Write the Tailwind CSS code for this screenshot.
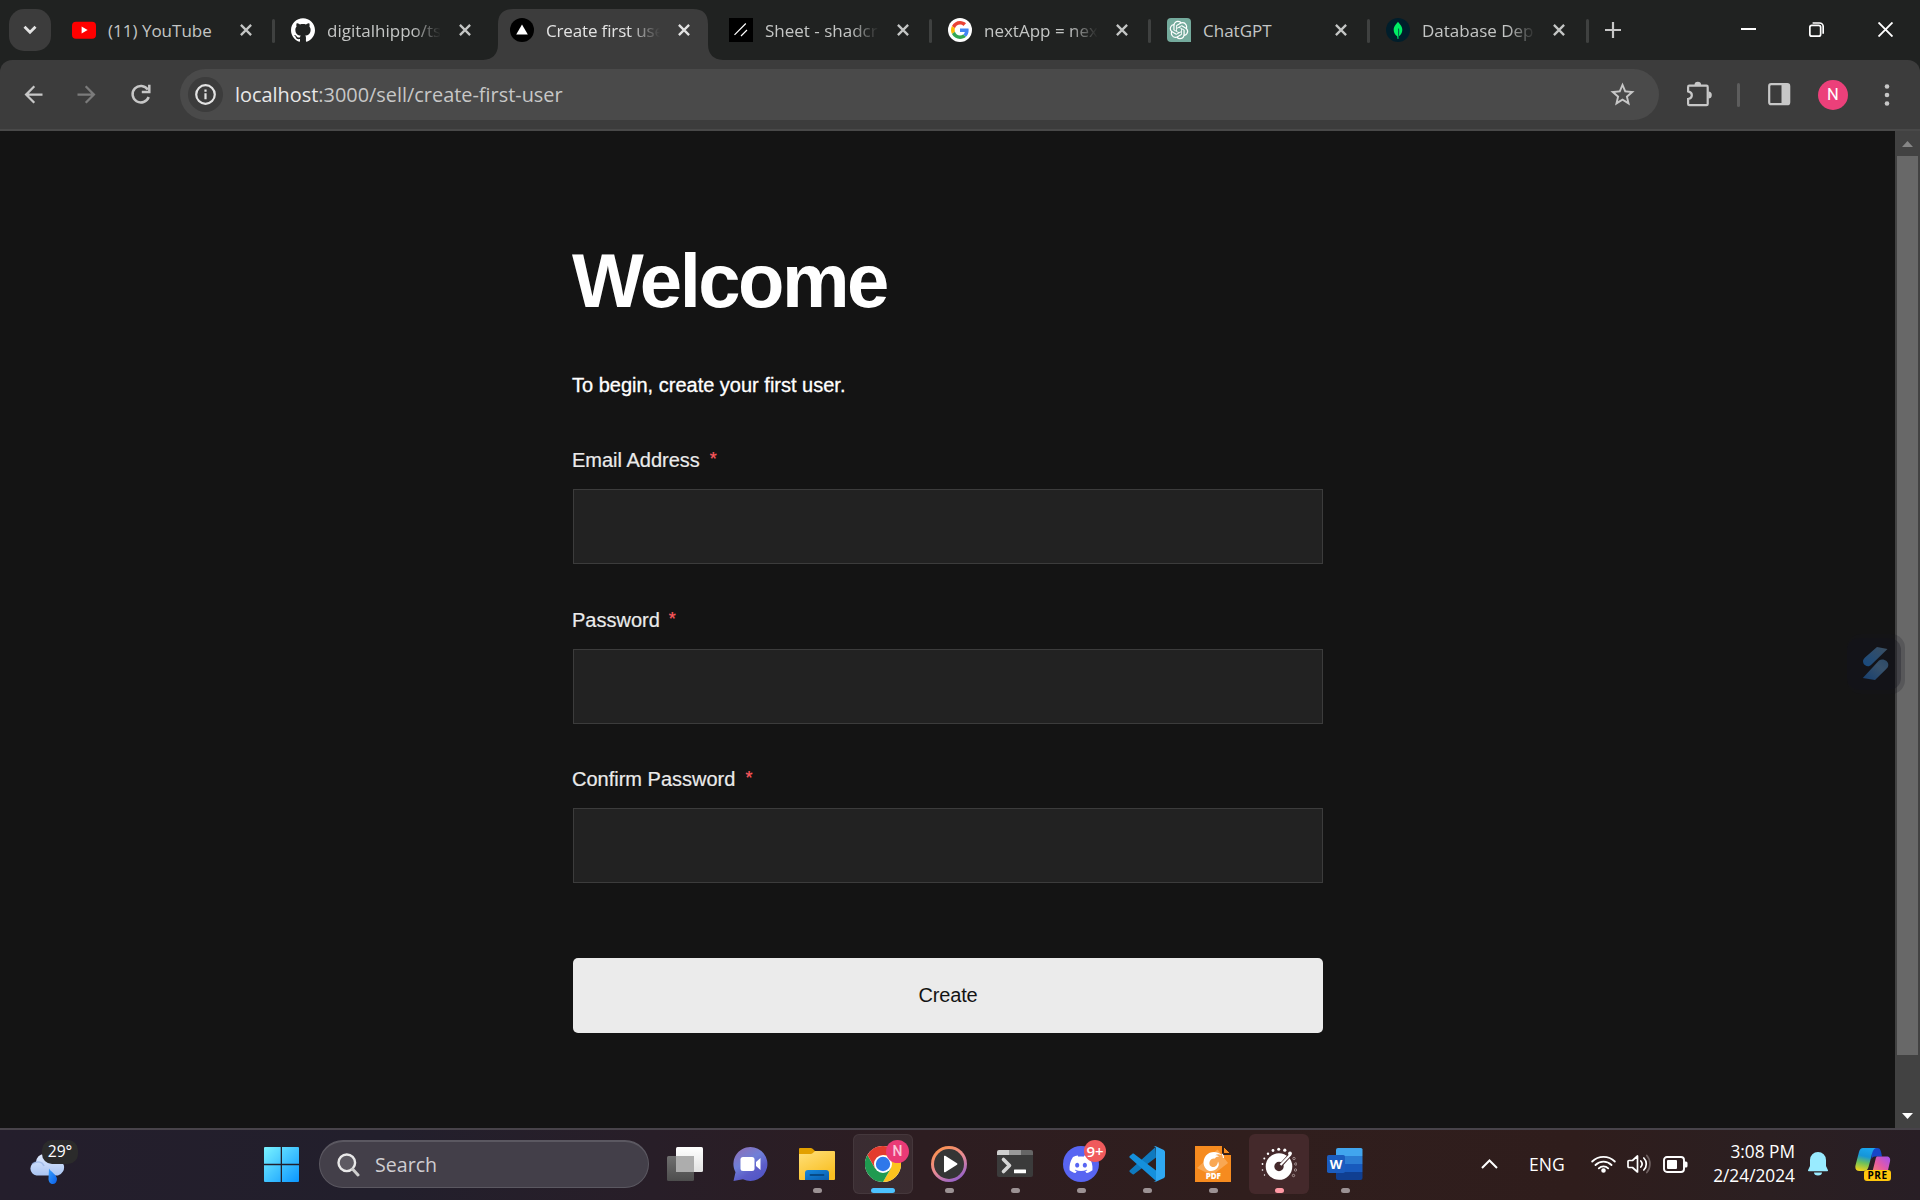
<!DOCTYPE html>
<html lang="en">
<head>
<meta charset="utf-8">
<title>Create first user</title>
<script src="https://cdn.jsdelivr.net/npm/@tailwindcss/browser@4"></script>
</head>
<body class="flex h-[1200px] w-[1920px] flex-col overflow-hidden bg-[#202221] font-['Open_Sans','Noto_Sans',sans-serif]">

<svg class="hidden">
  <symbol id="x" viewBox="0 0 12 12"><path d="M.9.9l10.2 10.2M11.1.9L.9 11.1" stroke="currentColor" stroke-width="2.3" fill="none"/></symbol>
</svg>

<!-- Tab strip -->
<header class="flex h-[60px] shrink-0 text-[17px] leading-6 text-[#c4c6c5]">
  <div class="w-[60px] pt-[9px] pl-[9px]">
    <div class="flex h-[42px] w-[42px] items-center justify-center rounded-[15px] bg-[#3c3c3c]">
      <svg width="14" height="10" viewBox="0 0 14 10" fill="none" stroke="#e3e3e3" stroke-width="2.8"><path d="M1.500 1.800L7 7.300l5.500-5.500"/></svg>
    </div>
  </div>

  <div class="flex w-[219px] items-center pl-3">
    <svg width="24" height="24" viewBox="0 0 24 24"><rect y="3.700" width="24" height="17" rx="4" fill="#f00"/><path d="M9.600 8.500v7l6-3.500z" fill="#fff"/></svg>
    <span class="mt-[2px] ml-3 w-[114px] overflow-hidden whitespace-nowrap">(11) YouTube</span>
    <svg class="ml-[18px]" width="12" height="12"><use href="#x"/></svg>
    <i class="mt-[2px] ml-[20px] h-6 w-[3px] rounded-full bg-[#3f4140]"></i>
  </div>

  <div class="flex w-[219px] items-center pl-3">
    <svg width="24" height="24" viewBox="0 0 24 24" fill="#fff"><path d="M12 .297c-6.630 0-12 5.373-12 12 0 5.303 3.438 9.800 8.205 11.385.6.113.82-.258.82-.577 0-.285-.01-1.040-.015-2.040-3.338.724-4.042-1.610-4.042-1.610C4.422 18.070 3.633 17.700 3.633 17.700c-1.087-.744.084-.729.084-.729 1.205.084 1.838 1.236 1.838 1.236 1.070 1.835 2.809 1.305 3.495.998.108-.776.417-1.305.76-1.605-2.665-.3-5.466-1.332-5.466-5.930 0-1.310.465-2.380 1.235-3.220-.135-.303-.54-1.523.105-3.176 0 0 1.005-.322 3.300 1.230.96-.267 1.980-.399 3-.405 1.020.006 2.040.138 3 .405 2.280-1.552 3.285-1.230 3.285-1.230.645 1.653.24 2.873.12 3.176.765.84 1.230 1.910 1.230 3.220 0 4.610-2.805 5.625-5.475 5.920.42.36.81 1.096.81 2.220 0 1.606-.015 2.896-.015 3.286 0 .315.21.69.825.57C20.565 22.092 24 17.592 24 12.297c0-6.627-5.373-12-12-12"/></svg>
    <span class="mt-[2px] ml-3 w-[114px] overflow-hidden whitespace-nowrap [mask-image:linear-gradient(to_right,#000_75%,transparent)]">digitalhippo/ts</span>
    <svg class="ml-[18px]" width="12" height="12"><use href="#x"/></svg>
  </div>

  <div class="relative flex w-[219px] items-center pl-3 text-[#e3e3e3]">
    <svg class="absolute bottom-0 -left-[15px]" width="240" height="51" viewBox="0 0 240 51" fill="#3c3c3c"><path d="M0 51Q15 50 15 35V15Q15 0 30 0H210Q225 0 225 15V35Q225 50 240 51Z"/></svg>
    <svg class="relative" width="24" height="24" viewBox="0 0 24 24"><circle cx="12" cy="12" r="12"/><path d="M12 6.500l5.800 9.900H6.200z" fill="#fff"/></svg>
    <span class="relative mt-[2px] ml-3 w-[114px] overflow-hidden tracking-[-0.150px] whitespace-nowrap [mask-image:linear-gradient(to_right,#000_72%,transparent)]">Create first use</span>
    <svg class="relative ml-[18px]" width="12" height="12"><use href="#x"/></svg>
  </div>

  <div class="flex w-[219px] items-center pl-3">
    <svg width="24" height="24" viewBox="0 0 24 24"><rect width="24" height="24"/><path d="M5.500 16.800L16.800 5.500M12 18l6-6" stroke="#fff" stroke-width="1.200"/></svg>
    <span class="mt-[2px] ml-3 w-[114px] overflow-hidden whitespace-nowrap [mask-image:linear-gradient(to_right,#000_75%,transparent)]">Sheet - shadcr</span>
    <svg class="ml-[18px]" width="12" height="12"><use href="#x"/></svg>
    <i class="mt-[2px] ml-[20px] h-6 w-[3px] rounded-full bg-[#3f4140]"></i>
  </div>

  <div class="flex w-[219px] items-center pl-3">
    <svg width="24" height="24" viewBox="0 0 24 24"><circle cx="12" cy="12" r="12" fill="#fff"/><g transform="translate(3 3) scale(.375)"><path fill="#EA4335" d="M24 9.500c3.540 0 6.710 1.220 9.210 3.600l6.850-6.850C35.900 2.380 30.470 0 24 0 14.620 0 6.510 5.380 2.560 13.220l7.980 6.190C12.430 13.720 17.740 9.500 24 9.500z"/><path fill="#4285F4" d="M46.980 24.550c0-1.570-.15-3.090-.38-4.550H24v9.020h12.940c-.58 2.960-2.260 5.480-4.780 7.180l7.730 6c4.510-4.180 7.090-10.360 7.090-17.650z"/><path fill="#FBBC05" d="M10.530 28.590c-.48-1.450-.76-2.990-.76-4.590s.27-3.140.76-4.590l-7.980-6.190C.92 16.460 0 20.120 0 24c0 3.880.92 7.540 2.560 10.780l7.970-6.190z"/><path fill="#34A853" d="M24 48c6.480 0 11.930-2.130 15.890-5.810l-7.730-6c-2.150 1.450-4.920 2.300-8.160 2.300-6.260 0-11.570-4.220-13.470-9.910l-7.980 6.190C6.510 42.620 14.620 48 24 48z"/></g></svg>
    <span class="mt-[2px] ml-3 w-[114px] overflow-hidden whitespace-nowrap [mask-image:linear-gradient(to_right,#000_75%,transparent)]">nextApp = nex</span>
    <svg class="ml-[18px]" width="12" height="12"><use href="#x"/></svg>
    <i class="mt-[2px] ml-[20px] h-6 w-[3px] rounded-full bg-[#3f4140]"></i>
  </div>

  <div class="flex w-[219px] items-center pl-3">
    <svg width="24" height="24" viewBox="0 0 24 24"><path d="M4 0h16a4 4 0 0 1 4 4v20H4a4 4 0 0 1-4-4V4a4 4 0 0 1 4-4z" fill="#74aa9c"/><path transform="translate(2.700 2.700) scale(.775)" fill="#fff" d="M22.2819 9.8211a5.9847 5.9847 0 0 0-.5157-4.9108 6.0462 6.0462 0 0 0-6.5098-2.9A6.0651 6.0651 0 0 0 4.9807 4.1818a5.9847 5.9847 0 0 0-3.9977 2.9 6.0462 6.0462 0 0 0 .7427 7.0966 5.98 5.98 0 0 0 .511 4.9107 6.051 6.051 0 0 0 6.5146 2.9001A5.9847 5.9847 0 0 0 13.2599 24a6.0557 6.0557 0 0 0 5.7718-4.2058 5.9894 5.9894 0 0 0 3.9977-2.9001 6.0557 6.0557 0 0 0-.7475-7.073zm-9.022 12.6081a4.4755 4.4755 0 0 1-2.8764-1.0408l.1419-.0804 4.7783-2.7582a.7948.7948 0 0 0 .3927-.6813v-6.7369l2.02 1.1686a.071.071 0 0 1 .038.052v5.5826a4.504 4.504 0 0 1-4.4945 4.4944zm-9.6607-4.1254a4.4708 4.4708 0 0 1-.5346-3.0137l.142.0852 4.783 2.7582a.7712.7712 0 0 0 .7806 0l5.8428-3.3685v2.3324a.0804.0804 0 0 1-.0332.0615L9.74 19.9502a4.4992 4.4992 0 0 1-6.1408-1.6464zM2.3408 7.8956a4.485 4.485 0 0 1 2.3655-1.9728V11.6a.7664.7664 0 0 0 .3879.6765l5.8144 3.3543-2.0201 1.1685a.0757.0757 0 0 1-.071 0l-4.8303-2.7865A4.504 4.504 0 0 1 2.3408 7.872zm16.5963 3.8558L13.1038 8.364 15.1192 7.2a.0757.0757 0 0 1 .071 0l4.8303 2.7913a4.4944 4.4944 0 0 1-.6765 8.1042v-5.6772a.79.79 0 0 0-.407-.667zm2.0107-3.0231l-.142-.0852-4.7735-2.7818a.7759.7759 0 0 0-.7854 0L9.409 9.2297V6.8974a.0662.0662 0 0 1 .0284-.0615l4.8303-2.7866a4.4992 4.4992 0 0 1 6.6802 4.66zM8.3065 12.863l-2.02-1.1638a.0804.0804 0 0 1-.038-.0567V6.0742a4.4992 4.4992 0 0 1 7.3757-3.4537l-.142.0805L8.704 5.459a.7948.7948 0 0 0-.3927.6813zm1.0976-2.3654l2.602-1.4998 2.6069 1.4998v2.9994l-2.5974 1.4997-2.6067-1.4997Z"/></svg>
    <span class="mt-[2px] ml-3 w-[114px] overflow-hidden whitespace-nowrap">ChatGPT</span>
    <svg class="ml-[18px]" width="12" height="12"><use href="#x"/></svg>
    <i class="mt-[2px] ml-[20px] h-6 w-[3px] rounded-full bg-[#3f4140]"></i>
  </div>

  <div class="flex w-[219px] items-center pl-3">
    <svg width="24" height="24" viewBox="0 0 24 24"><circle cx="12" cy="12" r="12" fill="#001e2b"/><path d="M12 3.800c.6 1.400 4.300 3.700 4.300 8.200 0 3-1.700 5-3.500 6.300L12.400 21h-.8l-.4-2.700C9.400 17 7.700 15 7.700 12c0-4.500 3.700-6.800 4.300-8.200z" fill="#00ed64"/><path d="M12 10.500h1c.4 2 .3 5.500-.2 7.600L12.400 21H12z" fill="#00684a"/></svg>
    <span class="mt-[2px] ml-3 w-[114px] overflow-hidden whitespace-nowrap [mask-image:linear-gradient(to_right,#000_75%,transparent)]">Database Dep</span>
    <svg class="ml-[17px]" width="12" height="12"><use href="#x"/></svg>
    <i class="mt-[2px] ml-[21px] h-6 w-[3px] rounded-full bg-[#3f4140]"></i>
  </div>

  <svg class="mt-[22px] ml-[12px]" width="16" height="16" viewBox="0 0 16 16" stroke="#c7c7c7" stroke-width="2.200"><path d="M8 0v16M0 8h16"/></svg>

  <div class="ml-auto flex items-start pt-[22px] pr-[27px]">
    <svg width="15" height="15" viewBox="0 0 15 15"><path d="M0 7h15" stroke="#fff" stroke-width="2"/></svg>
    <svg class="ml-[53px]" width="15" height="15" viewBox="0 0 15 15" fill="none" stroke="#fff" stroke-width="1.700"><rect x=".85" y="3.350" width="10.800" height="10.800" rx="2"/><path d="M3.600 1h6.900a3.700 3.700 0 0 1 3.700 3.700v7"/></svg>
    <svg class="ml-[54px]" width="15" height="15" viewBox="0 0 15 15" stroke="#fff" stroke-width="1.900"><path d="M.5.5l14 14M14.500.5l-14 14"/></svg>
  </div>
</header>

<!-- Toolbar -->
<nav class="flex h-[71px] shrink-0 items-center rounded-t-[12px] border-b-2 border-[#494949] bg-[#3c3c3c]">
  <svg class="ml-[20px]" width="27" height="27" viewBox="0 0 24 24" fill="#c7c7c7"><path d="M20 11H7.830l5.590-5.590L12 4l-8 8 8 8 1.410-1.410L7.830 13H20v-2z"/></svg>
  <svg class="ml-[26px]" width="27" height="27" viewBox="0 0 24 24" fill="#7b7b7b"><path d="M4 11h12.170l-5.590-5.590L12 4l8 8-8 8-1.410-1.410L16.170 13H4v-2z"/></svg>
  <svg class="ml-[27px]" width="27" height="27" viewBox="0 0 27 27" fill="none" stroke="#c7c7c7" stroke-width="2.500"><path d="M20.800 8.600A8.300 8.300 0 1 0 21.700 16"/><path d="M22.300 3.800v7.200h-7.500"/></svg>
  <div class="ml-[26px] flex h-[51px] w-[1479px] items-center rounded-full bg-[#4a4a4a] pl-2">
    <span class="flex h-[35px] w-[35px] items-center justify-center rounded-full bg-[#3c3c3c]">
      <svg width="21" height="21" viewBox="0 0 21 21"><circle cx="10.500" cy="10.500" r="9.300" fill="none" stroke="#e3e3e3" stroke-width="2.200"/><path d="M10.500 9.300v6M10.500 5.400v2.300" stroke="#e3e3e3" stroke-width="2.200"/></svg>
    </span>
    <span class="ml-[12px] text-[19.900px] leading-[30px] whitespace-nowrap text-[#c7c7c7]"><span class="text-[#e8e8e8]">localhost</span>:3000/sell/create-first-user</span>
    <svg class="mr-[22px] ml-auto" width="29" height="29" viewBox="0 0 24 24" fill="#c7c7c7"><path d="M22 9.240l-7.190-.62L12 2 9.190 8.630 2 9.240l5.460 4.730L5.820 21 12 17.270 18.180 21l-1.630-7.030L22 9.240zM12 15.400l-3.760 2.270 1-4.280-3.320-2.880 4.380-.38L12 6.100l1.710 4.040 4.380.38-3.320 2.880 1 4.280L12 15.400z"/></svg>
  </div>
  <svg class="mb-[2px] ml-[27px]" width="26" height="26" viewBox="0 0 26 26"><path d="M3.300 4.700h17.200a1.200 1.200 0 0 1 1.200 1.200v17a1.200 1.200 0 0 1-1.200 1.200H3.300a1.200 1.200 0 0 1-1.200-1.200V18c5-1 5-6.600 0-7.600V5.900a1.200 1.200 0 0 1 1.200-1.200z" fill="none" stroke="#c7c7c7" stroke-width="2.200"/><path d="M8.500 4a3.300 3.300 0 0 1 6.600 0zM22.300 10.600a3.400 3.400 0 0 1 0 7z" fill="#c7c7c7"/></svg>
  <i class="ml-[25px] h-6 w-[3px] rounded-full bg-[#5d5d5d]"></i>
  <svg class="ml-[28px]" width="23" height="23" viewBox="0 0 23 23"><rect x="1.200" y="1.200" width="20" height="20" rx="2" fill="none" stroke="#c7c7c7" stroke-width="2.200"/><path d="M13.500 1.500h8v20h-8z" fill="#c7c7c7"/></svg>
  <span class="ml-[27px] flex h-[30px] w-[30px] items-center justify-center rounded-full bg-[#ec407a] pt-px font-[Roboto] text-[16.500px] text-white">N</span>
  <svg class="ml-[36px]" width="6" height="22" viewBox="0 0 6 22" fill="#c7c7c7"><circle cx="3" cy="2.500" r="2.300"/><circle cx="3" cy="11" r="2.300"/><circle cx="3" cy="19.500" r="2.300"/></svg>
</nav>

<!-- Page -->
<div class="relative flex h-[997px] shrink-0 bg-[#141414]">
  <main class="flex-1 font-['Liberation_Sans',Arial,sans-serif]">
    <form class="ml-[573px] flex w-[750px] flex-col pt-[105px] text-[20px] leading-6 text-[#ebebeb]">
      <h1 class="-ml-px text-[76px] leading-[90px] font-bold tracking-[-2.500px] text-white">Welcome</h1>
      <p class="mt-[47px] -ml-px text-white [-webkit-text-stroke:0.3px_#fff]">To begin, create your first user.</p>
      <div class="mt-[51px] flex flex-col gap-[17px]">
        <label class="-ml-px flex h-6 items-start [-webkit-text-stroke:0.2px]">Email Address<span class="-mt-px ml-[10px] text-[18px] text-[#ff5a5f]">*</span></label>
        <div class="h-[75px] border border-[#3c3c3c] bg-[#222]"></div>
      </div>
      <div class="mt-[44px] flex flex-col gap-[17px]">
        <label class="-ml-px flex h-6 items-start [-webkit-text-stroke:0.2px]">Password<span class="-mt-px ml-[9px] text-[18px] text-[#ff5a5f]">*</span></label>
        <div class="h-[75px] border border-[#3c3c3c] bg-[#222]"></div>
      </div>
      <div class="mt-[43px] flex flex-col gap-[17px]">
        <label class="-ml-px flex h-6 items-start [-webkit-text-stroke:0.2px]">Confirm Password<span class="-mt-px ml-[10px] text-[18px] text-[#ff5a5f]">*</span></label>
        <div class="h-[75px] border border-[#3c3c3c] bg-[#222]"></div>
      </div>
      <button class="mt-[75px] h-[75px] rounded-[5px] bg-[#ebebeb] pb-[2px] tracking-[-0.200px] text-[#141414]">Create</button>
    </form>
  </main>

  <!-- Scrollbar -->
  <div class="flex w-[25px] flex-col items-center bg-[#424242]">
    <svg class="mt-[10px]" width="11" height="6"><path d="M0 6L5.500 0L11 6z" fill="#868686"/></svg>
    <div class="mt-[9px] h-[899px] w-[21px] bg-[#686868]"></div>
    <svg class="mt-auto mb-[9px]" width="11" height="6"><path d="M0 0L5.500 6L11 0z" fill="#fff"/></svg>
  </div>

  <!-- Floating extension handle -->
  <div class="absolute top-[503px] right-[15px] flex h-[60px] w-[58px] items-center rounded-[14px] bg-[#15161f]/20 pl-[15px]">
    <span class="absolute inset-y-1 right-1 left-0 rounded-[12px] bg-[#14151f]/30"></span>
    <svg class="relative -top-px" width="27" height="34" viewBox="0 0 27 34">
      <defs><linearGradient id="sa" x1="1" y1="0" x2="0" y2="1"><stop stop-color="#3d4f60"/><stop offset="1" stop-color="#174a80"/></linearGradient><linearGradient id="sb" x1="1" y1="0" x2="0" y2="1"><stop stop-color="#2c4966"/><stop offset=".35" stop-color="#37516b"/><stop offset="1" stop-color="#163f70"/></linearGradient></defs>
      <path d="M15 1L25.500 3 9.500 18.500C6.500 22 2.500 19.500 1.500 17.500.5 15 1 13.500 3 11.500z" fill="url(#sa)"/>
      <path d="M.8 32L17 14.500C21 12 26.500 15 26.300 19c-.1 2-1 3-2.300 4.200L13 34z" fill="url(#sb)"/>
    </svg>
  </div>
</div>

<!-- Taskbar -->
<footer class="flex h-[72px] shrink-0 items-center border-t-2 border-[#48434a] bg-[linear-gradient(90deg,#241e2c_0%,#221f2c_20%,#281e28_34%,#2d1d21_48%,#301e1d_65%,#2f1d1c_82%,#2b1f21_92%,#281e25_100%)] pb-[2px] text-white">
  <div class="relative mb-[2px] ml-[29px] h-[44px] w-[50px]">
    <svg class="absolute top-[12px] left-0" width="38" height="32" viewBox="0 0 38 32">
      <defs><linearGradient id="cl" x1="0" y1="0" x2="0" y2="1"><stop stop-color="#e2ecff"/><stop offset="1" stop-color="#a9c4f2"/></linearGradient><linearGradient id="dr" x1="0" y1="0" x2="1" y2="1"><stop stop-color="#38a0ff"/><stop offset="1" stop-color="#0a5fe8"/></linearGradient></defs>
      <path d="M7.500 22.500a7 7 0 0 1-.5-13.800A9.500 9.500 0 0 1 25 6a8.500 8.500 0 0 1 4 16.500z" fill="url(#cl)"/><path d="M3 11c4-3 10-3 12 2" stroke="#8fabe0" stroke-width="1.500" fill="none" opacity=".6"/>
      <path d="M20 15.500c1 2.500 8 6.500 8 10.500 0 3-2 5-4.200 5S19.500 29 19.500 26z" fill="url(#dr)"/>
    </svg>
    <span class="absolute -top-px left-[13px] flex h-[24px] w-[36px] items-center justify-center rounded-[10px] bg-[#2b2b2b] text-[15.700px]">29°</span>
  </div>

  <svg class="ml-[185px]" width="35" height="35" viewBox="0 0 35 35"><defs><linearGradient id="win" x1="0" y1="0" x2="1" y2="1"><stop stop-color="#7af3ff"/><stop offset="1" stop-color="#0a96ff"/></linearGradient></defs><path fill="url(#win)" d="M1 0h15.700v16.700H0V1a1 1 0 0 1 1-1zM18 0h16a1 1 0 0 1 1 1v15.700H18zM0 18.200h16.700V35H1a1 1 0 0 1-1-1zM18 18.200h17V34a1 1 0 0 1-1 1H18z"/></svg>

  <div class="ml-[20px] flex h-[48px] w-[330px] items-center rounded-full border border-t-2 border-[#5b5861] bg-[#433f49] pl-[17px]">
    <svg width="23" height="24" viewBox="0 0 23 24"><circle cx="9.800" cy="9.800" r="8.300" fill="#5d5a62" stroke="#e9e9e9" stroke-width="2.400"/><path d="M15.500 16l5.500 6" stroke="#cfcfcf" stroke-width="3" stroke-linecap="round"/></svg>
    <span class="ml-[15px] text-[19.600px] text-[#cfcdd1]">Search</span>
  </div>

  <div class="ml-[6px] flex gap-[6px]">
    <!-- Task view -->
    <div class="relative flex h-[60px] w-[60px] items-center justify-center">
      <svg width="36" height="36" viewBox="0 0 36 36"><defs><linearGradient id="tv" x1="0" y1="0" x2="0" y2="1"><stop stop-color="#fff"/><stop offset="1" stop-color="#e2e2e2"/></linearGradient><linearGradient id="tg" x1="0" y1="0" x2="0" y2="1"><stop stop-color="#6f6f6f"/><stop offset="1" stop-color="#4d4d4d"/></linearGradient></defs><rect x="9" y="1" width="27" height="25" rx="1.500" fill="url(#tv)"/><rect y="10" width="27" height="25" rx="1.500" fill="url(#tg)"/><path d="M9 10h18v16H9z" fill="#adadad"/></svg>
    </div>
    <!-- Chat -->
    <div class="relative flex h-[60px] w-[60px] items-center justify-center">
      <svg width="36" height="36" viewBox="0 0 36 36"><defs><linearGradient id="ch" x1=".2" y1="0" x2=".8" y2="1"><stop stop-color="#8b70b8"/><stop offset=".4" stop-color="#6f7fd8"/><stop offset=".7" stop-color="#5b5cc8"/><stop offset="1" stop-color="#4f55c6"/></linearGradient></defs><path d="M17.500 1a17 17 0 1 1-7.500 32.300L.5 35l2-8.800A17 17 0 0 1 17.500 1z" fill="url(#ch)"/><rect x="7.500" y="11" width="14" height="14" rx="2.500" fill="#fff"/><path d="M23 16l4.500-4v12l-4.500-4z" fill="#fff"/></svg>
    </div>
    <!-- File Explorer -->
    <div class="relative flex h-[60px] w-[60px] items-center justify-center">
      <svg width="36" height="36" viewBox="0 0 36 36"><defs><linearGradient id="fo" x1="0" y1="0" x2=".6" y2="1"><stop stop-color="#ffe07a"/><stop offset="1" stop-color="#f9bf22"/></linearGradient><linearGradient id="fb" x1="0" y1="0" x2="1" y2="1"><stop stop-color="#1588de"/><stop offset="1" stop-color="#0a5cab"/></linearGradient></defs><path d="M0 3a1 1 0 0 1 1-1h10.500c1 0 1.700.4 2.400 1L16 5H34v5H0z" fill="#e2a000"/><path d="M0 8h11.500c1 0 1.700-.4 2.400-1L16 5h19a1 1 0 0 1 1 1v27a1 1 0 0 1-1 1H1a1 1 0 0 1-1-1z" fill="url(#fo)"/><path d="M6 34V27a3 3 0 0 1 3-3h18a3 3 0 0 1 3 3v7z" fill="url(#fb)"/><path d="M11.500 29h13" stroke="#064a86" stroke-width="1.800" stroke-linecap="round"/></svg>
      <i class="absolute bottom-[1px] h-[5px] w-[9px] rounded-full bg-[#9c9294]"></i>
    </div>
    <!-- Chrome -->
    <div class="relative flex h-[60px] w-[60px] items-center justify-center rounded-[6px] border border-white/5 bg-white/7">
      <svg width="36" height="36" viewBox="0 0 36 36"><circle cx="18" cy="18" r="18" fill="#fff"/><path d="M18 18L2.410 9A18 18 0 0 1 33.590 9H18z" fill="#e33b2e"/><path d="M33.590 9A18 18 0 0 1 18 36L25.790 22.500 18 9z" fill="#fcc31e"/><path d="M2.410 9A18 18 0 0 0 18 36L25.790 22.500 18 18 10.200 22.500z" fill="#1f9a50"/><path d="M18 9H2.410L10.200 22.500 18 18z" fill="#e33b2e"/><circle cx="18" cy="18" r="9" fill="#fff"/><circle cx="18" cy="18" r="7.200" fill="#2f78ea"/></svg>
      <span class="absolute top-[5px] left-[32px] flex h-[23px] w-[23px] items-center justify-center rounded-full bg-[#ea3a76] font-[Roboto] text-[14px] font-medium text-[#f9c6d8]">N</span>
      <i class="absolute bottom-0 h-[5px] w-6 rounded-full bg-[#4cc2ff]"></i>
    </div>
    <!-- Media Player -->
    <div class="relative flex h-[60px] w-[60px] items-center justify-center">
      <svg width="36" height="36" viewBox="0 0 36 36"><defs><linearGradient id="mp" x1=".2" y1="0" x2=".8" y2="1"><stop stop-color="#ff9248"/><stop offset=".5" stop-color="#e88b96"/><stop offset="1" stop-color="#8a5bd0"/></linearGradient></defs><circle cx="18" cy="18" r="18" fill="url(#mp)"/><circle cx="18" cy="18" r="15" fill="#353535"/><path d="M13 10.500v15a.8.8 0 0 0 1.200.7L26 18.800a1 1 0 0 0 0-1.600L14.200 9.800A.8.8 0 0 0 13 10.500z" fill="#fff"/></svg>
      <i class="absolute bottom-[1px] h-[5px] w-[9px] rounded-full bg-[#9c9294]"></i>
    </div>
    <!-- Terminal -->
    <div class="relative flex h-[60px] w-[60px] items-center justify-center">
      <svg width="36" height="36" viewBox="0 0 36 36"><path d="M0 6a2 2 0 0 1 2-2h10v6H0z" fill="#cfcfcf"/><path d="M12 4h12v6H12z" fill="#999"/><path d="M24 4h10a2 2 0 0 1 2 2v4H24z" fill="#666"/><path d="M0 9h36v20a2 2 0 0 1-2 2H2a2 2 0 0 1-2-2z" fill="#3b3b3b"/><path d="M6.500 13.500l6 6-6 6" fill="none" stroke="#d6d6d6" stroke-width="3.600" stroke-linecap="round" stroke-linejoin="round"/><rect x="17" y="23.500" width="12" height="3.800" rx=".5" fill="#fff"/></svg>
      <i class="absolute bottom-[1px] h-[5px] w-[9px] rounded-full bg-[#9c9294]"></i>
    </div>
    <!-- Discord -->
    <div class="relative flex h-[60px] w-[60px] items-center justify-center">
      <svg width="36" height="36" viewBox="0 0 36 36"><circle cx="18" cy="18" r="18" fill="#5865f2"/><path transform="translate(6.500 6.800) scale(.96)" fill="#fff" d="M20.317 4.3698a19.7913 19.7913 0 00-4.8851-1.5152.0741.0741 0 00-.0785.0371c-.211.3753-.4447.8648-.6083 1.2495-1.8447-.2762-3.68-.2762-5.4868 0-.1636-.3933-.4058-.8742-.6177-1.2495a.077.077 0 00-.0785-.037 19.7363 19.7363 0 00-4.8852 1.515.0699.0699 0 00-.0321.0277C.5334 9.0458-.319 13.5799.0992 18.0578a.0824.0824 0 00.0312.0561c2.0528 1.5076 4.0413 2.4228 5.9929 3.0294a.0777.0777 0 00.0842-.0276c.4616-.6304.8731-1.2952 1.226-1.9942a.076.076 0 00-.0416-.1057c-.6528-.2476-1.2743-.5495-1.8722-.8923a.077.077 0 01-.0076-.1277c.1258-.0943.2517-.1923.3718-.2914a.0743.0743 0 01.0776-.0105c3.9278 1.7933 8.18 1.7933 12.0614 0a.0739.0739 0 01.0785.0095c.1202.099.246.1981.3728.2924a.077.077 0 01-.0066.1276 12.2986 12.2986 0 01-1.873.8914.0766.0766 0 00-.0407.1067c.3604.698.7719 1.3628 1.225 1.9932a.076.076 0 00.0842.0286c1.961-.6067 3.9495-1.5219 6.0023-3.0294a.077.077 0 00.0313-.0552c.5004-5.177-.8382-9.6739-3.5485-13.6604a.061.061 0 00-.0312-.0286zM8.02 15.3312c-1.1825 0-2.1569-1.0857-2.1569-2.419 0-1.3332.9555-2.4189 2.157-2.4189 1.2108 0 2.1757 1.0952 2.1568 2.419 0 1.3332-.9555 2.4189-2.1569 2.4189zm7.9748 0c-1.1825 0-2.1569-1.0857-2.1569-2.419 0-1.3332.9554-2.4189 2.1569-2.4189 1.2108 0 2.1757 1.0952 2.1568 2.419 0 1.3332-.946 2.4189-2.1568 2.4189Z"/></svg>
      <span class="absolute top-[6px] left-[33px] flex h-[22px] w-[22px] items-center justify-center rounded-full bg-[#f05a5c] text-[15px] font-semibold text-white">9+</span>
      <i class="absolute bottom-[1px] h-[5px] w-[9px] rounded-full bg-[#9c9294]"></i>
    </div>
    <!-- VS Code -->
    <div class="relative flex h-[60px] w-[60px] items-center justify-center">
      <svg width="36" height="36" viewBox="0 0 36 36"><path d="M26.500 1L.8 24.200a1.200 1.200 0 0 0 0 1.700l2.400 2.200c.5.5 1.200.5 1.700.1L27 11.500z" fill="#0f7abf"/><path d="M27 35L.8 11.800a1.200 1.200 0 0 1 0-1.700l2.400-2.200c.5-.5 1.200-.5 1.700-.1L27 24.500z" fill="#1590dc"/><path d="M26.800 35.800c-1 .4-1.800 0-2.400-.6 1 .8 2.600.2 2.600-1.200V2c0-1.400-1.600-2-2.600-1.200.6-.6 1.400-1 2.400-.6l7.500 3.500c.9.4 1.700 1.200 1.700 2.300v24c0 1-.6 1.900-1.500 2.300z" fill="#2fa8f2"/></svg>
      <i class="absolute bottom-[1px] h-[5px] w-[9px] rounded-full bg-[#9c9294]"></i>
    </div>
    <!-- PDF reader -->
    <div class="relative flex h-[60px] w-[60px] items-center justify-center">
      <svg width="36" height="36" viewBox="0 0 36 36"><path d="M0 0h27v9h9v27H0z" fill="#f68b1f"/><path d="M28.500.5V7.500H35.500z" fill="#f68b1f" stroke="#3b2010" stroke-width="1"/><path d="M22.500 3.500L33 17 17 29.500 2 22z" fill="#fbb36a" opacity=".7"/><path d="M26 8.500C22 5 15 5 11 9.500c-4 5-3 12 2 15 3 1.200 8 .5 10-3.500 1.300-2 .8-4 0-5.500-.3 3-2 5.500-4.700 5.500-3 0-4.600-2.500-3.600-5.500.8-2.500 3-3.500 5.300-3 .5-1.500 2.500-2 4-1.500-.8-1.500-2.500-2-4-1.500 2-1.500 4-1.500 6-.5z" fill="#fff"/><path d="M27 8c1 1 1.500 2.500 1.500 4" stroke="#fff" stroke-width="1.200" fill="none"/><text x="18.300" y="33" text-anchor="middle" font-family="Open Sans" font-weight="800" font-size="8" fill="#fff">PDF</text></svg>
      <i class="absolute bottom-[1px] h-[5px] w-[9px] rounded-full bg-[#9c9294]"></i>
    </div>
    <!-- Dial -->
    <div class="relative flex h-[60px] w-[60px] items-center justify-center rounded-[6px] bg-[#44292b]">
      <svg width="36" height="36" viewBox="0 0 36 36"><circle cx="18" cy="20.500" r="9" fill="none" stroke="#fff" stroke-width="8.600"/><path d="M19.500 19.500L30 8" stroke="#44292b" stroke-width="3.800"/><path d="M19.500 19L29.500 8.500" stroke="#fff" stroke-width="2.200"/><g fill="#fff"><circle cx="29" cy="7.500" r="1.900"/><circle cx="23.800" cy="4.200" r="1.600"/><circle cx="17.700" cy="3.200" r="1.500"/><circle cx="12" cy="4.500" r="1.400"/><circle cx="7" cy="7.800" r="1.200"/><circle cx="3.300" cy="12.500" r="1"/><circle cx="1.500" cy="18" r=".9"/><circle cx="1.500" cy="24" r=".8"/><circle cx="3.500" cy="29" r=".7"/></g><g fill="none" stroke="#b5a5a5" stroke-width=".8"><circle cx="33" cy="12.500" r="1.200"/><circle cx="34.800" cy="18" r="1.200"/><circle cx="34.500" cy="24" r="1.200"/><circle cx="32.500" cy="29.500" r="1.200"/></g></svg>
      <i class="absolute bottom-[1px] h-[5px] w-[9px] rounded-full bg-[#ff99a4]"></i>
    </div>
    <!-- Word -->
    <div class="relative flex h-[60px] w-[60px] items-center justify-center">
      <svg width="36" height="36" viewBox="0 0 36 36"><path d="M9 4a2 2 0 0 1 2-2h23a1.500 1.500 0 0 1 1.500 1.500V10H9z" fill="#41a5ee"/><path d="M9 10h26.500v8H9z" fill="#2b7cd3"/><path d="M9 18h26.500v8H9z" fill="#185abd"/><path d="M9 26h26.500v6a2 2 0 0 1-2 2H11a2 2 0 0 1-2-2z" fill="#103f91"/><rect x="0" y="9" width="18" height="18" rx="1.800" fill="#1b5cbe"/><text x="9" y="23" text-anchor="middle" font-family="Open Sans" font-weight="700" font-size="13" fill="#fff">W</text></svg>
      <i class="absolute bottom-[1px] h-[5px] w-[9px] rounded-full bg-[#9c9294]"></i>
    </div>
  </div>

  <!-- Tray -->
  <div class="ml-auto flex items-center pr-[29px]">
    <svg width="17" height="10" viewBox="0 0 17 10" fill="none" stroke="#fff" stroke-width="2"><path d="M1 9l7.500-7.500L16 9"/></svg>
    <span class="ml-[31px] w-[36px] text-[17.500px]">ENG</span>
    <svg class="ml-[26px]" width="25" height="18" viewBox="0 0 25 18" fill="none" stroke="#fff" stroke-width="1.800" stroke-linecap="round"><path d="M1.200 6.500a16 16 0 0 1 22.600 0M4.500 10a11.300 11.300 0 0 1 16 0M7.800 13.300a6.600 6.600 0 0 1 9.400 0"/><circle cx="12.500" cy="15.500" r="1.400" fill="#fff"/></svg>
    <svg class="ml-[11px]" width="25" height="20" viewBox="0 0 25 20" fill="none" stroke="#fff" stroke-width="1.700" stroke-linecap="round" stroke-linejoin="round"><path d="M1 7.500a1 1 0 0 1 1-1h3.500L10.500 2v16L5.500 13.500H2a1 1 0 0 1-1-1z"/><path d="M13.800 7a4.500 4.500 0 0 1 0 6M16.800 4a8.500 8.500 0 0 1 0 12"/><path d="M19.800 1.500a13 13 0 0 1 0 17" stroke="#6e6060"/></svg>
    <svg class="ml-[11px]" width="25" height="17" viewBox="0 0 25 17"><rect x="1" y="1" width="20" height="15" rx="3" fill="none" stroke="#fff" stroke-width="1.900"/><rect x="4" y="4" width="10" height="9" rx="1" fill="#fff"/><path d="M21.500 5.500h1.500a1.500 1.500 0 0 1 1.500 1.500v3a1.500 1.500 0 0 1-1.500 1.500h-1.500z" fill="#fff"/></svg>
    <div class="ml-[19px] w-[88px] text-right text-[17.300px] leading-6"><div>3:08 PM</div><div>2/24/2024</div></div>
    <svg class="ml-[13px]" width="20" height="24" viewBox="0 0 20 24" fill="#99ebff"><path d="M10 0a8 8 0 0 1 8 8v6l2 4.200c.2.600-.2 1-.7 1H.7c-.5 0-.9-.4-.7-1L2 14V8a8 8 0 0 1 8-8zM6 20.500h8a4 3 0 0 1-8 0z"/></svg>
    <div class="relative ml-[27px] h-[34px] w-[36px]">
      <svg width="36" height="28" viewBox="0 0 36 28"><defs><linearGradient id="ca" x1=".5" y1="0" x2=".3" y2="1"><stop stop-color="#1aa5ee"/><stop offset=".35" stop-color="#1695d8"/><stop offset=".65" stop-color="#6ec15a"/><stop offset="1" stop-color="#f0d21c"/></linearGradient><linearGradient id="cb" x1="1" y1="0" x2="0" y2="1"><stop stop-color="#a250f2"/><stop offset=".5" stop-color="#e45aa6"/><stop offset="1" stop-color="#fb8f5e"/></linearGradient></defs><path d="M17 1h5.500c3 0 3.500 3 4.500 8.500h-7c-2 0-3 1-3.500 3z" fill="#1646c8"/><path d="M8 1h13c-3 1-3.500 4-4.500 8l-3 11c-1 3-2.500 4-5 4H4.500C1 24-.3 21.500.6 18L4 5c.7-2.500 2-4 4-4z" fill="url(#ca)"/><path d="M22 9.500h9.500c3 0 4.200 2 3.500 5l-3 13H16c1.500-1 1.500-3 2-5l2.500-10c.3-1.500.6-2.500 1.500-3z" fill="url(#cb)"/></svg>
      <span class="absolute right-0 bottom-0 flex h-[11px] w-[27px] items-center justify-center rounded-[3px] bg-[#ffc60d] text-[10px] font-bold tracking-[0.500px] text-black">PRE</span>
    </div>
  </div>
</footer>
</body>
</html>
